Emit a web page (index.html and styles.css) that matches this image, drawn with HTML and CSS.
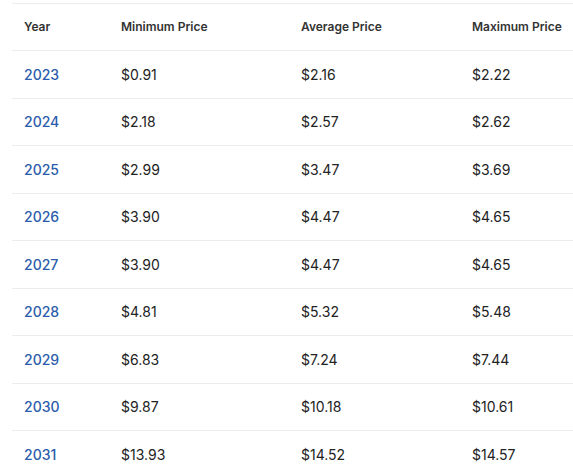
FILE: index.html
```html
<!DOCTYPE html>
<html>
<head>
<meta charset="utf-8">
<link rel="stylesheet" href="styles.css">
</head>
<body>
<div class="wrap">
<table class="prices">
  <thead>
    <tr><th class="c-year">Year</th><th class="c-min">Minimum Price</th><th class="c-avg">Average Price</th><th class="c-max">Maximum Price</th></tr>
  </thead>
  <tbody>
    <tr><td class="year">2023</td><td>$0.91</td><td>$2.16</td><td>$2.22</td></tr>
    <tr><td class="year">2024</td><td>$2.18</td><td>$2.57</td><td>$2.62</td></tr>
    <tr><td class="year">2025</td><td>$2.99</td><td>$3.47</td><td>$3.69</td></tr>
    <tr><td class="year">2026</td><td>$3.90</td><td>$4.47</td><td>$4.65</td></tr>
    <tr><td class="year">2027</td><td>$3.90</td><td>$4.47</td><td>$4.65</td></tr>
    <tr><td class="year">2028</td><td>$4.81</td><td>$5.32</td><td>$5.48</td></tr>
    <tr><td class="year">2029</td><td>$6.83</td><td>$7.24</td><td>$7.44</td></tr>
    <tr><td class="year">2030</td><td>$9.87</td><td>$10.18</td><td>$10.61</td></tr>
    <tr><td class="year">2031</td><td>$13.93</td><td>$14.52</td><td>$14.57</td></tr>
  </tbody>
</table>
</div>
</body>
</html>
```
FILE: styles.css
```css
html, body {
  margin: 0;
  padding: 0;
  background: #fff;
  overflow: hidden;
}
body {
  font-family: Inter, "Noto Sans", sans-serif;
  color: #222;
}
.wrap {
  padding: 3px 0 0 12px;
}
.prices {
  border-collapse: collapse;
  table-layout: fixed;
  width: 561px;
  border-top: 1px solid #ececec;
}
.prices th, .prices td {
  text-align: left;
  padding: 0 12px;
  border-bottom: 1px solid #ececec;
  white-space: nowrap;
}
.prices th:last-child, .prices td:last-child {
  padding-right: 0;
}
.prices th {
  height: 44px;
  font-size: 12px;
  font-weight: 600;
  color: #333;
  padding-bottom: 2px;
}
.prices td {
  height: 46.5px;
  font-size: 14px;
  color: #222;
}
.prices td.year {
  color: #2b5cab;
  font-weight: 500;
}
.c-year { width: 73px; }
.c-min { width: 156px; }
.c-avg { width: 147px; }
.c-max { width: 101px; }
```
